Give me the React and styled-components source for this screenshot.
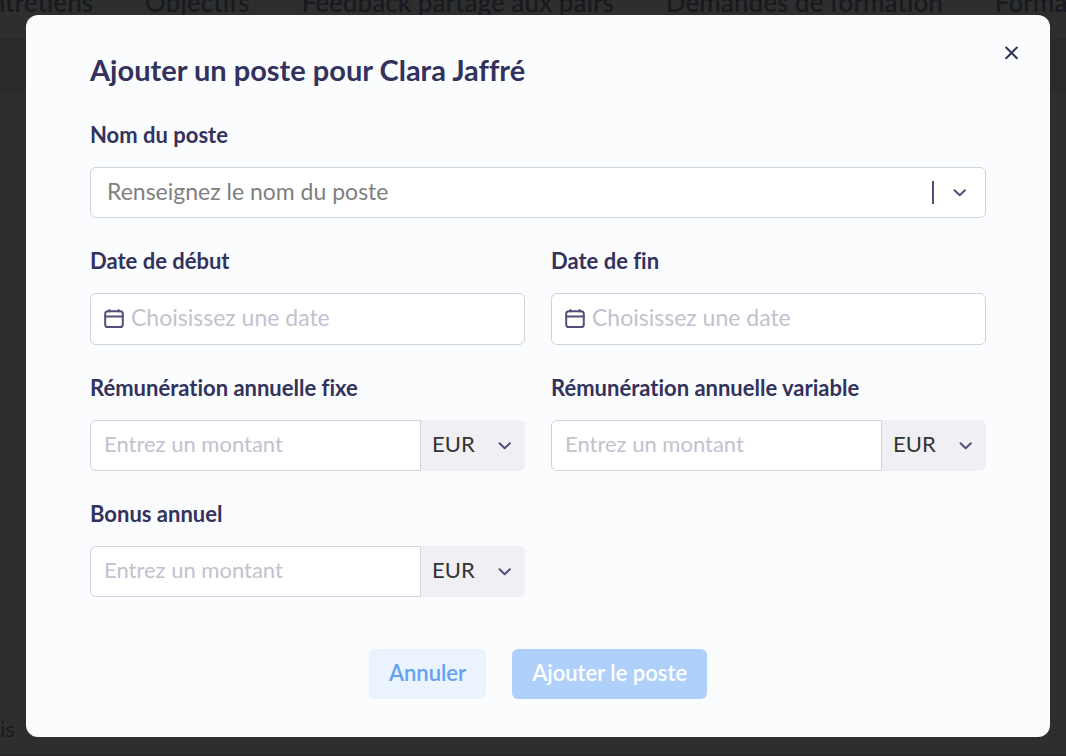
import React, { useState } from "react";
import styled, { createGlobalStyle } from "styled-components";

const GlobalStyle = createGlobalStyle`
  * {
    box-sizing: border-box;
  }

  body {
    margin: 0;
    background-color: #2d2f2e;
    font-family: Lato, "Liberation Sans", sans-serif;
    font-size: 22px;
    font-variant-ligatures: none;
    overflow: hidden;
  }

  input, select, button {
    font-family: inherit;
    font-size: inherit;
    font-variant-ligatures: inherit;
  }
`;

const Page = styled.div`
  display: flex;
  flex-direction: column;
  height: 100vh;
  overflow: hidden;
  color: #19191f;
`;

const Nav = styled.nav`
  display: flex;
  flex-shrink: 0;
  gap: 52px;
  height: 40px;
  margin-left: -24px;
  border-bottom: 1px solid #272828;
  overflow: hidden;
`;

const NavLink = styled.a`
  margin-top: -14px;
  color: inherit;
  font-size: 26px;
  font-weight: 600;
  line-height: 32px;
  text-decoration: none;
  white-space: nowrap;
`;

const Band = styled.div`
  flex-shrink: 0;
  height: 52px;
  background-color: #2b2a2a;
`;

const PageBody = styled.div`
  display: flex;
  flex: 1;
  flex-direction: column;
  justify-content: flex-end;
  padding-bottom: 12px;
  border-bottom: 1px solid #2c2428;
  line-height: 28px;
`;

const Overlay = styled.div`
  position: fixed;
  top: 0;
  right: 0;
  bottom: 0;
  left: 0;
  padding: 15px 16px 19px 26px;
  overflow: hidden;
`;

const Modal = styled.div`
  background-color: #fbfcfe;
  border-radius: 12px;
  color: #32325d;
`;

const Header = styled.div`
  display: flex;
  justify-content: space-between;
  align-items: flex-start;
  padding: 26px 26px 0 64px;
`;

const Title = styled.h1`
  margin: 0;
  padding-top: 13px;
  font-size: 29px;
  font-weight: 700;
  line-height: 32px;
`;

const CloseButton = styled.button`
  display: flex;
  align-items: center;
  justify-content: center;
  width: 24px;
  height: 24px;
  padding: 0;
  border: none;
  background: none;
  color: #32325d;
`;

const Form = styled.form`
  padding: 35px 64px 38px;
`;

const Fields = styled.div`
  display: grid;
  grid-template-columns: 1fr 1fr;
  gap: 29px 26px;
`;

const Field = styled.div`
  display: flex;
  flex-direction: column;
  gap: 18px;
  grid-column: ${props => (props.$wide ? "1 / -1" : "auto")};
`;

const Label = styled.label`
  font-weight: 700;
  line-height: 28px;
`;

const Control = styled.div`
  display: flex;
  align-items: center;
  height: ${props => (props.$tall ? "52px" : "51px")};
  padding: ${props => props.$padding || "0"};
  background-color: white;
  border: 1px solid #ced3dd;
  border-radius: 6px;
  color: #525078;
  font-size: 23px;
`;

const Input = styled.input`
  flex: 1;
  min-width: 0;
  height: 100%;
  padding: 0 0 4px;
  border: none;
  outline: none;
  background: none;
  color: #32325d;

  &::placeholder {
    color: ${props => (props.$dark ? "#808080" : "#c3c1cf")};
    opacity: 1;
  }
`;

const DateInput = styled(Input)`
  margin-left: 7px;
`;

const Separator = styled.span`
  width: 2px;
  height: 23px;
  background-color: #525078;
`;

const ToggleButton = styled.button`
  display: flex;
  align-items: center;
  justify-content: center;
  width: 51px;
  height: 100%;
  padding: 0;
  border: none;
  background: none;
  color: inherit;
`;

const Amount = styled.div`
  display: flex;
  height: 51px;
`;

const AmountInput = styled(Input)`
  padding: 0 13px 4px;
  background-color: white;
  border: 1px solid #ced3dd;
  border-radius: 6px 0 0 6px;
`;

const Currency = styled.div`
  display: grid;
  align-items: center;
  width: 104px;
  background-color: #f0f0f4;
  border-radius: 0 6px 6px 0;
  color: #525078;

  > * {
    grid-area: 1 / 1;
  }

  > svg {
    justify-self: end;
    margin-right: 13px;
    pointer-events: none;
  }
`;

const CurrencySelect = styled.select`
  width: 100%;
  height: 100%;
  padding: 0 11px 4px;
  appearance: none;
  border: none;
  outline: none;
  background: none;
  color: #333;
`;

const Actions = styled.div`
  display: flex;
  justify-content: center;
  gap: 26px;
  margin-top: 52px;
`;

const Button = styled.button`
  height: 50px;
  padding: 0 20px 4px;
  border: none;
  border-radius: 6px;
  background-color: ${props => (props.$primary ? "#afd0fa" : "#ebf3fe")};
  color: ${props => (props.$primary ? "white" : "#63a2f3")};
  font-weight: 600;
`;

const ChevronIcon = () => (
  <svg width="14" height="14" viewBox="0 0 14 14" fill="none" stroke="currentColor" strokeWidth="2" strokeLinecap="round" strokeLinejoin="round">
    <path d="M1.5 4.2L6.7 9.2L11.9 4.2" />
  </svg>
);

const CloseIcon = () => (
  <svg width="14" height="14" viewBox="0 0 14 14" fill="none" stroke="currentColor" strokeWidth="2" strokeLinecap="round">
    <path d="M1.2 1.5L11.9 12.2M11.9 1.5L1.2 12.2" />
  </svg>
);

const CalendarIcon = () => (
  <svg width="20" height="20" viewBox="0 0 20 20" fill="none" stroke="currentColor" strokeWidth="2" strokeLinecap="round">
    <rect x="1.2" y="2.2" width="17.6" height="15.8" rx="2.6" />
    <path d="M1.2 7.6H18.8M5.4 1V2.4M14.6 1V2.4" />
  </svg>
);

const DateField = ({ id, label }) => (
  <Field>
    <Label htmlFor={id}>{label}</Label>
    <Control $tall $padding="0 13px">
      <CalendarIcon />
      <DateInput id={id} type="text" placeholder="Choisissez une date" />
    </Control>
  </Field>
);

const AmountField = ({ id, label }) => (
  <Field>
    <Label htmlFor={id}>{label}</Label>
    <Amount>
      <AmountInput id={id} type="text" placeholder="Entrez un montant" />
      <Currency>
        <CurrencySelect aria-label="Devise">
          <option>EUR</option>
        </CurrencySelect>
        <ChevronIcon />
      </Currency>
    </Amount>
  </Field>
);

const links = [
  "Entretiens",
  "Objectifs",
  "Feedback partagé aux pairs",
  "Demandes de formation",
  "Formations"
];

export default function App() {
  const [position, setPosition] = useState("");

  return (
    <>
      <GlobalStyle />
      <Page>
        <Nav>
          {links.map(link => (
            <NavLink key={link} href="#">{link}</NavLink>
          ))}
        </Nav>
        <Band />
        <PageBody>is</PageBody>
      </Page>

      <Overlay>
        <Modal role="dialog" aria-labelledby="modal-title">
          <Header>
            <Title id="modal-title">Ajouter un poste pour Clara Jaffré</Title>
            <CloseButton type="button" aria-label="Fermer">
              <CloseIcon />
            </CloseButton>
          </Header>
          <Form onSubmit={e => e.preventDefault()}>
            <Fields>
              <Field $wide>
                <Label htmlFor="position">Nom du poste</Label>
                <Control $padding="0 0 0 16px">
                  <Input
                    $dark
                    id="position"
                    type="text"
                    placeholder="Renseignez le nom du poste"
                    value={position}
                    onChange={e => setPosition(e.target.value)}
                  />
                  <Separator />
                  <ToggleButton type="button" aria-label="Ouvrir la liste">
                    <ChevronIcon />
                  </ToggleButton>
                </Control>
              </Field>
              <DateField id="start" label="Date de début" />
              <DateField id="end" label="Date de fin" />
              <AmountField id="fixed" label="Rémunération annuelle fixe" />
              <AmountField id="variable" label="Rémunération annuelle variable" />
              <AmountField id="bonus" label="Bonus annuel" />
            </Fields>
            <Actions>
              <Button type="button">Annuler</Button>
              <Button type="submit" $primary>Ajouter le poste</Button>
            </Actions>
          </Form>
        </Modal>
      </Overlay>
    </>
  );
}
